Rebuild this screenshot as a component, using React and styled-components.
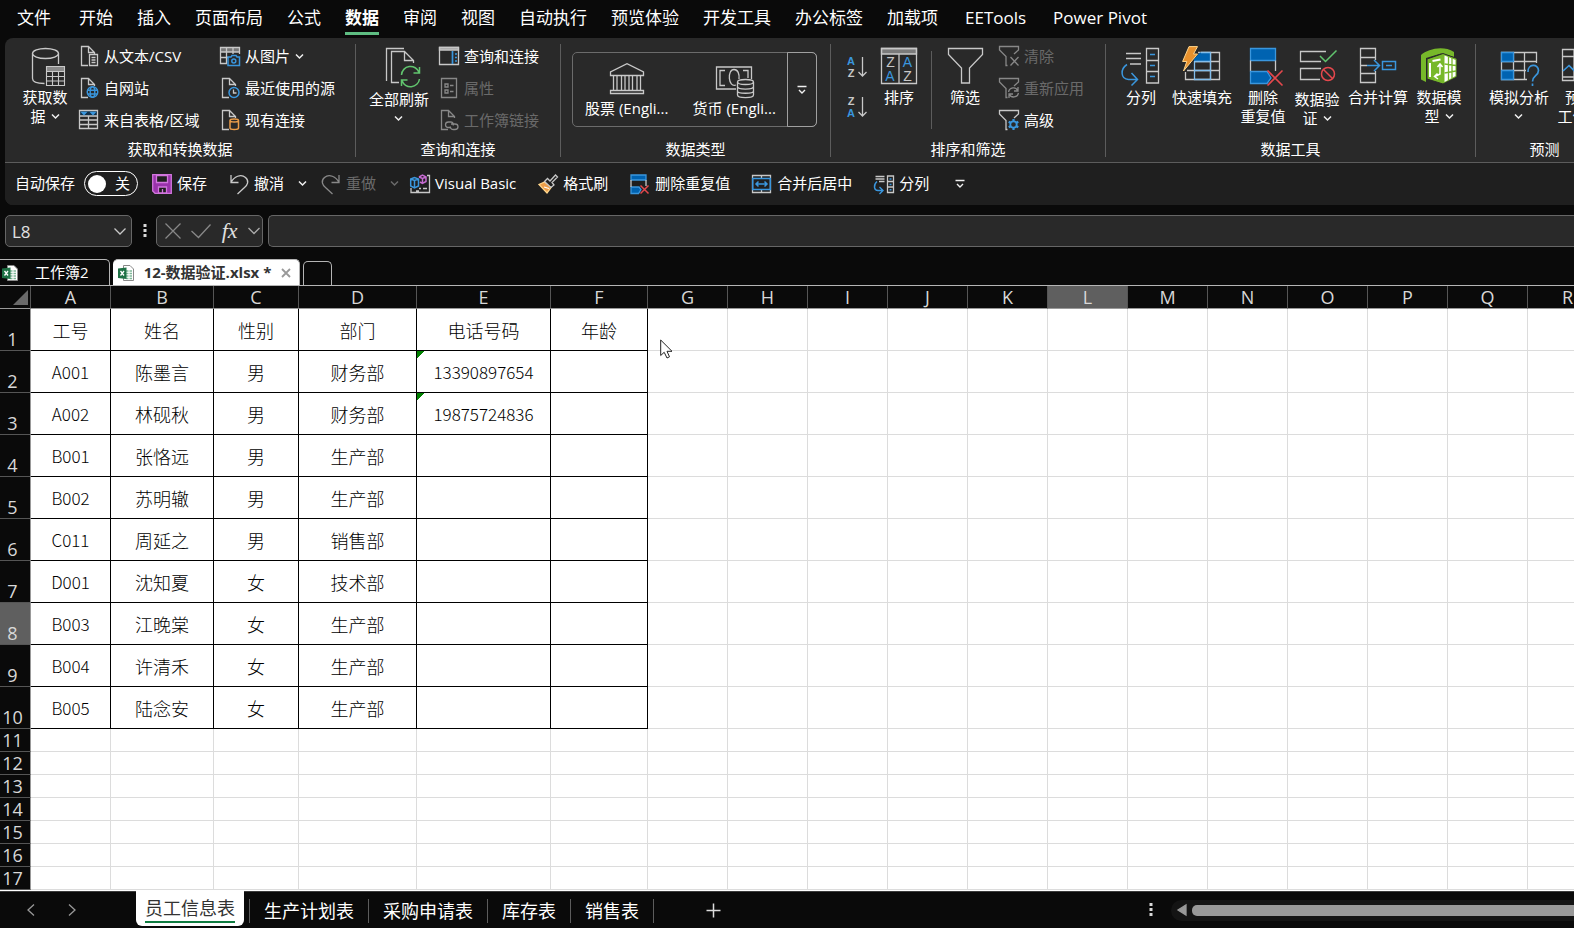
import React, { useState } from 'react'
import styled, { createGlobalStyle, css } from 'styled-components'

const GRAY = '#c8c8c8'
const BLUE = '#3a96dd'
const FILL = '#0063b1'
const RED = '#e5484d'
const DIM = '#6a6a6a'

/* ---------- icons ---------- */

function Svg({ w = 20, h = 20, children }) {
  return (
    <svg width={w} height={h} viewBox={`0 0 ${w} ${h}`} fill="none" stroke={GRAY} strokeWidth="1.3" aria-hidden="true">
      {children}
    </svg>
  )
}

const Big = ({ children }) => <Svg w={40} h={40}>{children}</Svg>

const Chevron = ({ color = '#f0f0f0' }) => (
  <Svg w={9} h={7}>
    <path d="M1 1.5L4.5 5L8 1.5" stroke={color} strokeWidth="1.5" />
  </Svg>
)

const MoreChevron = () => (
  <Svg w={10} h={10}>
    <path d="M0.5 1.5H9.5M2 5L5 8L8 5" stroke="#f0f0f0" strokeWidth="1.4" />
  </Svg>
)

const DatabaseIcon = () => (
  <Big>
    <ellipse cx="20.5" cy="7.5" rx="13" ry="5" />
    <path d="M7.5 7.5V32.5C7.5 35.5 12 37.5 19.5 37.5M33.5 7.5V18" />
    <path d="M21.5 21H40V25H21.5z" fill="#8a8a8a" stroke="none" />
    <path d="M21.5 20.5H39.5V39.5H21.5zM21.5 25.5H39.5M21.5 30.5H39.5M21.5 35H39.5M27.5 25.5V39.5M33.5 25.5V39.5" strokeWidth="1.1" />
  </Big>
)

const RefreshAllIcon = () => (
  <Big>
    <path d="M25 2.5H7.5V35" />
    <path d="M20 36.5H12.5V5.5H25.5L34.5 14.5V17M25.5 5.5V14.5H34.5" />
    <path d="M22.5 29A9 9 0 0 1 40 26.5M40.5 21V27H34.5M40.5 33A9 9 0 0 1 23 34.500M22.5 40V34H28.5" stroke="#61c46e" strokeWidth="1.5" />
  </Big>
)

const SortIcon = () => (
  <Big>
    <path d="M2.5 2.5H37.5V8H2.5z" fill="#7a7a7a" />
    <path d="M2.5 2.5H37.5V37.5H2.5zM20 8V37.5" />
    <g stroke="none" fontSize="14" fontFamily="Liberation Sans, sans-serif" textAnchor="middle">
      <text x="11.5" y="21" fill={GRAY}>Z</text>
      <text x="11" y="35" fill={BLUE}>A</text>
      <text x="28.5" y="21" fill={BLUE}>A</text>
      <text x="28.5" y="35" fill={GRAY}>Z</text>
    </g>
  </Big>
)

const FilterIcon = () => (
  <Big>
    <path d="M3.5 2.5H37.5V8.5L24.5 22V37H16.5V22L3.5 8.5z" />
  </Big>
)

const ColumnsIcon = () => (
  <Big>
    <path d="M25.5 2.5H37.5V37H25.5zM25.5 14.5H37.5M25.5 25.5H37.5M5 7.5H20M5 12.5H20M9 18H20" />
    <path d="M29 8.5H34M29 19.5H34M29 30.5H34M6 18.5C-1 23 -0.5 33 7.5 33.5H16M10.5 27L16.5 33.5L10.5 39.5" stroke={BLUE} strokeWidth="1.5" />
  </Big>
)

const FlashFillIcon = () => (
  <Big>
    <path d="M16 6.5H37.5V33.5H3.5V26M28.5 6.5V33.5M5 24.5H37.5M12 15.5H37.5" />
    <path d="M18 6.5H28.5V15.5H12V13z" fill={FILL} stroke="none" />
    <path d="M12.5 15V33.5H28.5V6.5H19M12.5 15.5H28.5M12.5 24.5H28.5" stroke="#83beec" />
    <path d="M7 0.6H15.5L11.5 8H15.5L1.5 25L4.8 15.5H0.6z" fill="#e8912d" stroke="#ffd58a" strokeWidth="1" />
  </Big>
)

const RemoveDupIcon = () => (
  <Big>
    <path d="M7.5 2.5H32.5V14.5H7.5z" fill={FILL} stroke={BLUE} />
    <path d="M7.5 14.5V25.5M32.5 14.5V25" />
    <path d="M24 25.5H7.5V37.5H24L28 32z" fill={FILL} stroke={BLUE} />
    <path d="M24.5 24.5L39.5 39.5M39.5 24.5L24.5 39.5" stroke={RED} strokeWidth="1.6" />
  </Big>
)

const ValidationIcon = () => (
  <Big>
    <path d="M29 5.5H3.5V15.5H24M24 22.5H3.5V33.5H23" />
    <path d="M23 10L28.5 15.5L39.5 4.5" stroke="#61c46e" strokeWidth="1.5" />
    <circle cx="31" cy="28" r="6.5" stroke={RED} strokeWidth="1.5" />
    <path d="M26.5 23.5L35.5 32.5" stroke={RED} strokeWidth="1.5" />
  </Big>
)

const ConsolidateIcon = () => (
  <Big>
    <path d="M2.5 2.5H17.5V11.5H2.5zM2.5 27.5H17.5V36.5H2.5zM2.5 11.5V27.5M2.5 19.5H9M17.5 11.5V14M17.5 25V27.5" />
    <path d="M9 19.5H21.5M16 14L21.5 19.5L16 25M24.5 15.5H37.5V23.5H24.5zM28 19.5H34" stroke={BLUE} strokeWidth="1.5" />
  </Big>
)

const DataModelIcon = () => (
  <Big>
    <path d="M2 9C9 3 24 -1 35 6V11L22 7.5L7 12V36L2 33.5z" fill="#77b82a" stroke="none" />
    <path d="M24 7.5L38 12.5V31L24 38L8 33V13z" fill="#77b82a" stroke="#292929" strokeWidth="1" />
    <path d="M25.5 9.5L36.5 14V30L25.5 36z" fill="#fff" stroke="none" />
    <path d="M25.5 18L37 19.5M25.5 27L37 25M29.5 11V34M33 12V32" stroke="#77b82a" />
    <path d="M11 17V31M13.5 15L21.5 13.5" stroke="#fff" strokeWidth="2" />
    <path d="M21 18V28L16 30.5M18.5 21L21 18L23.5 21M18.5 27.5L15.5 30.5L19 33" stroke="#fff" strokeWidth="1.5" />
  </Big>
)

const WhatIfIcon = () => (
  <Big>
    <path d="M28 33.5H2.5V6.5H37.5V17M14.5 6.5V33.5M25.5 6.5V33.5M2.5 15.5H37.5M2.5 24.5H27" />
    <path d="M2.5 6.5H14.5V15.5H2.5zM2.5 24.5H14.5V33.5H2.5z" fill={FILL} stroke={BLUE} />
    <path d="M29 26C28.5 17.5 39.5 17.5 39.5 24.5C39.5 30 33.5 29.5 33.5 35.5M33.5 37.5V40" stroke={BLUE} strokeWidth="1.7" />
  </Big>
)

const ForecastIcon = () => (
  <Big>
    <path d="M2.5 3.5H37.5V34.5H2.5zM2.5 10.5H37.5M14 3.5V34.5M25.5 3.5V34.5M2.5 31H14" />
    <path d="M3 25L9 19.5L14 24.5L24 14L38 22" stroke={BLUE} strokeWidth="1.6" />
  </Big>
)

const BankIcon = () => (
  <Svg w={40} h={38}>
    <path d="M3.5 14.5V11L20 2.7L36.5 11V14.5zM3.5 32.5V29.5H36.5V32.5zM6.5 14.5V29.5M10 14.5V29.5M14.5 14.5V29.5M18 14.5V29.5M22 14.5V29.5M25.5 14.5V29.5M30 14.5V29.5M33.5 14.5V29.5" />
  </Svg>
)

const MoneyIcon = () => (
  <Svg w={40} h={38}>
    <path d="M22 28H2.5V6H37.5V18M11 9.5H6V24.5H11M29 9.5H34V17" />
    <path d="M22 24C14 27 13 8.5 20 8.5C24 8.5 25.5 13 25 18" />
    <ellipse cx="31.5" cy="21" rx="8" ry="2.5" />
    <path d="M23.5 21V34C23.5 37.5 39.5 37.5 39.5 34V21M23.5 25.5C23.5 29 39.5 29 39.5 25.5M23.5 30C23.5 33 39.5 33 39.5 30" />
  </Svg>
)

const SortAz = ({ desc }) => (
  <Svg w={22} h={24}>
    <g stroke="none" fontSize="11" fontWeight="700" fontFamily="Liberation Sans, sans-serif" textAnchor="middle">
      <text x="5" y="10" fill={desc ? GRAY : BLUE}>{desc ? 'Z' : 'A'}</text>
      <text x="5" y="22" fill={desc ? BLUE : GRAY}>{desc ? 'A' : 'Z'}</text>
    </g>
    <path d="M16.5 2V21M12.5 17L16.5 21L20.5 17" />
  </Svg>
)

const Page = ({ color }) => <path d="M9 19.5H2.5V0.5H9.5L15.5 6.5V8M9.5 0.5V6.5H15.5" stroke={color || GRAY} />

const CsvIcon = () => (
  <Svg>
    <Page />
    <path d="M10.5 8.5H18.5V19.5H10.5zM12.5 11.5H16.5M12.5 14H16.5M12.5 16.5H16.5" />
  </Svg>
)
const WebIcon = () => (
  <Svg>
    <Page />
    <g stroke={BLUE} strokeWidth="1.4">
      <circle cx="13.5" cy="14" r="5.3" />
      <ellipse cx="13.5" cy="14" rx="2.3" ry="5.3" />
      <path d="M8.5 12.3H18.5M8.5 16H18.5" />
    </g>
  </Svg>
)
const TableIcon = () => (
  <Svg>
    <path d="M0.5 1H18.5V5.5H0.5z" fill="#10304a" stroke="none" />
    <path d="M0.5 0.5H18.5V18.5H0.5zM0.5 6H18.5M0.5 10H18.5M0.5 14.5H18.5M9.5 6V18.5" />
    <path d="M3 2.5H7L5 4.5zM12 2.5H16L14 4.5z" fill={BLUE} stroke={BLUE} />
  </Svg>
)
const PictureIcon = () => (
  <Svg>
    <path d="M0.5 2H19V6H0.5z" fill="#777" stroke="none" />
    <path d="M7 17.5H0.5V1.5H19.5V8M0.5 6H19.5M0.5 11.5H8M6.5 1.5V17.5M13 1.5V8" />
    <path d="M8 11H11L12 9.5H16L17 11H19.5V19.5H8z" fill="#292929" stroke={BLUE} strokeWidth="1.5" />
    <circle cx="13.8" cy="15" r="2" stroke={BLUE} strokeWidth="1.5" />
  </Svg>
)
const RecentIcon = () => (
  <Svg>
    <Page />
    <circle cx="14" cy="14.5" r="5" stroke={BLUE} strokeWidth="1.5" />
    <path d="M13.5 11.5V15H16.5" />
  </Svg>
)
const ConnectionIcon = () => (
  <Svg>
    <Page />
    <path d="M10 10.5V18C10 20 18.5 20 18.5 18V10.5C18.5 8.5 10 8.5 10 10.5C10 12.5 18.5 12.5 18.5 10.5" fill="#292929" stroke="#eb9d4a" strokeWidth="1.5" />
  </Svg>
)
const QueriesIcon = () => (
  <Svg>
    <path d="M0.5 1.5H19.5V4H0.5z" fill="#999" />
    <path d="M0.5 1.5H19.5V18.5H0.5z" />
    <path d="M13.5 5V18M16 8H18M16 11.5H18M16 15H18" stroke={BLUE} strokeWidth="1.7" />
  </Svg>
)
const PropsIcon = () => (
  <Svg>
    <path d="M2.5 0.5H17.5V19.5H2.5z" stroke="#888" />
    <path d="M6 6H9V9H6zM6 12H9V15H6zM11 7.5H14.5M11 13.5H14.5" stroke="#888" />
  </Svg>
)
const LinkIcon = () => (
  <Svg>
    <Page color="#888" />
    <path d="M12 17.5H9.5C5.5 17.5 5.5 12 9.5 12H12C14 12 15 14 14 15.5M12 14H16C20 14 20 19.5 16 19.5H14C12 19.5 11 17.5 11.5 16.5" stroke="#888" />
  </Svg>
)

const Funnel = ({ color }) => <path d="M8.5 19.5H7V10.5L0.5 4V0.5H19.5V4L15 8" stroke={color} />

const ClearIcon = () => (
  <Svg>
    <Funnel color="#888" />
    <path d="M11.5 11L19.5 19.5M19.5 11L11.5 19.5" stroke="#888" />
  </Svg>
)
const ReapplyIcon = () => (
  <Svg>
    <Funnel color="#888" />
    <path d="M9.5 14C10.5 9 17 8.5 18.5 12.5M19 9V13H15M19.5 15C18.5 20 12 20 10.5 16.5M10 20V16H14" stroke="#888" />
  </Svg>
)
const AdvancedIcon = () => (
  <Svg>
    <Funnel color={GRAY} />
    <circle cx="14.5" cy="14.5" r="3.2" stroke={BLUE} strokeWidth="1.8" />
    <path d="M14.5 9V11M14.5 18V20M9.7 11.8L11.5 12.8M17.5 16.2L19.3 17.2M19.3 11.8L17.5 12.8M11.5 16.2L9.7 17.2" stroke={BLUE} strokeWidth="2.2" />
  </Svg>
)
const SaveIcon = () => (
  <Svg>
    <path d="M0.7 0.7H19.3V19.3H3L0.7 17z" fill="#9a33ab" stroke="#d176dd" />
    <path d="M4.5 1.5H15.5V8.5H4.5zM6.5 13H14.5V19H6.5z" fill="#1f1f1f" stroke="#d176dd" />
    <path d="M10.5 15V19" stroke="#d176dd" />
  </Svg>
)
const UndoIcon = () => (
  <Svg>
    <path d="M2 1V8.5H9.5M2 8.5C5 2.5 12 -0.5 16.5 3.5C20.5 7 18.5 11 15.5 13.5L8.5 20" />
  </Svg>
)
const RedoIcon = () => (
  <Svg>
    <path d="M18 1V8.5H10.5M18 8.5C15 2.5 8 -0.5 3.5 3.5C-0.5 7 1.5 11 4.5 13.5L11.5 20" stroke="#888" />
  </Svg>
)
const VbIcon = () => (
  <Svg>
    <path d="M1 14V18.5H19.5V1.5H17M9 14.5H11M13 14.5H17M6 17H9" />
    <path d="M0.7 5L4.5 3.5L8.5 5V12L4.5 14L0.7 12zM0.7 5L4.5 6.5L8.5 5M4.5 6.5V14" stroke={BLUE} strokeWidth="1.5" />
    <path d="M9 3L12.5 1L16 3V7.5L12.5 9.5L10 8M9 3L12.5 4.5L16 3M12.5 4.5V9" stroke="#c56bd0" strokeWidth="1.5" />
  </Svg>
)
const BrushIcon = () => (
  <Svg>
    <path d="M6.5 8L1 10.5L9 19L13.5 13z" fill="#eb9d4a" stroke="#ffd58a" />
    <path d="M6.5 7.5L9.5 4.5L12 7L17.5 1L19.5 3L14 8.5L16 11L13 13.5z" fill="#1f1f1f" />
    <path d="M6 13L11 14.5" stroke="#fff" />
  </Svg>
)
const DupSmallIcon = () => (
  <Svg>
    <path d="M1 1H16V6H1zM1 13H9L11 15.5L8.5 19.5H1z" fill={FILL} stroke={BLUE} />
    <path d="M1 6V13M16 6V12" />
    <path d="M10.5 11.5L18.5 19.5M18.5 11.5L10.5 19.5" stroke={RED} strokeWidth="1.5" />
  </Svg>
)
const MergeIcon = () => (
  <Svg>
    <path d="M0.5 1.5H18.5V18.5H0.5zM9.5 1.5V5M9.5 15V18.5" />
    <path d="M0.7 4.5H18.3V15.5H0.7zM4 10H15M6.5 7.5L4 10L6.5 12.5M12.5 7.5L15 10L12.5 12.5" stroke={BLUE} strokeWidth="1.5" />
  </Svg>
)
const ColumnsSmallIcon = () => (
  <Svg>
    <path d="M13.5 2H19.5V18.5H13.5zM13.5 7.5H19.5M13.5 13H19.5M1.5 2.5H10.5M1.5 5H10.5M5 7.5H10.5" />
    <path d="M3 7.5C-1 11 0 16.5 4 16.5H8.5M5.5 13L9 16.5L5.5 20M15.5 5H17.5M15.5 10.5H17.5M15.5 15.8H17.5" stroke={BLUE} strokeWidth="1.4" />
  </Svg>
)
const ExcelIcon = () => (
  <Svg w={16} h={16}>
    <path d="M5.5 0.5H12L15.5 4V15.5H5.5z" fill="#fff" stroke="#888" strokeWidth="1" />
    <path d="M8 6H14M8 8.5H14M8 11H14M8 13.5H14" stroke="#7fb899" strokeDasharray="2.5 1" />
    <path d="M0 3.5L8.5 2.5V14L0 13z" fill="#1e7145" stroke="none" />
    <path d="M2.5 6L6 10.5M6 6L2.5 10.5" stroke="#fff" />
  </Svg>
)
const Dots = () => (
  <Svg w={4} h={14}>
    <path d="M0.5 0H3.5V3H0.5zM0.5 5H3.5V8H0.5zM0.5 10H3.5V13H0.5z" fill="#d8d8d8" stroke="none" />
  </Svg>
)

/* ---------- data ---------- */

const menus = ['文件', '开始', '插入', '页面布局', '公式', '数据', '审阅', '视图', '自动执行', '预览体验', '开发工具', '办公标签', '加载项', 'EETools', 'Power Pivot']

const columns = [
  ['A', 80], ['B', 103], ['C', 85], ['D', 118], ['E', 134], ['F', 97],
  ...'GHIJKLMNOPQR'.split('').map((c) => [c, 80]),
]

const records = [
  ['工号', '姓名', '性别', '部门', '电话号码', '年龄'],
  ['A001', '陈墨言', '男', '财务部', '13390897654', ''],
  ['A002', '林砚秋', '男', '财务部', '19875724836', ''],
  ['B001', '张恪远', '男', '生产部', '', ''],
  ['B002', '苏明辙', '男', '生产部', '', ''],
  ['C011', '周延之', '男', '销售部', '', ''],
  ['D001', '沈知夏', '女', '技术部', '', ''],
  ['B003', '江晚棠', '女', '生产部', '', ''],
  ['B004', '许清禾', '女', '生产部', '', ''],
  ['B005', '陆念安', '女', '生产部', '', ''],
]

const rowNumbers = Array.from({ length: 17 }, (_, i) => i + 1)
const sheets = ['员工信息表', '生产计划表', '采购申请表', '库存表', '销售表']

/* ---------- pieces ---------- */

function BigButton({ icon, lines, width, chevron, split }) {
  return (
    <BigBtn $width={width} $split={split}>
      {icon}
      <span>
        {lines.map((line, i) => (
          <BigLine key={i}>
            {line}
            {chevron && i === lines.length - 1 && <Chevron />}
          </BigLine>
        ))}
      </span>
    </BigBtn>
  )
}

function SmallButton({ icon, children, disabled, chevron }) {
  return (
    <SmallBtn disabled={disabled}>
      {icon}
      {children}
      {chevron && <Chevron />}
    </SmallBtn>
  )
}

function Group({ title, width, children }) {
  return (
    <GroupBox $width={width} aria-label={title}>
      <GroupBody>{children}</GroupBody>
      <GroupTitle>{title}</GroupTitle>
    </GroupBox>
  )
}

function Ribbon() {
  return (
    <RibbonRow>
      <Group title="获取和转换数据" width={351}>
        <Spacer $w={10} />
        <BigButton icon={<DatabaseIcon />} lines={['获取数', '据']} width={60} chevron />
        <SmallColumn $width={141}>
          <SmallButton icon={<CsvIcon />}>从文本/CSV</SmallButton>
          <SmallButton icon={<WebIcon />}>自网站</SmallButton>
          <SmallButton icon={<TableIcon />}>来自表格/区域</SmallButton>
        </SmallColumn>
        <SmallColumn>
          <SmallButton icon={<PictureIcon />} chevron>从图片</SmallButton>
          <SmallButton icon={<RecentIcon />}>最近使用的源</SmallButton>
          <SmallButton icon={<ConnectionIcon />}>现有连接</SmallButton>
        </SmallColumn>
      </Group>
      <Group title="查询和连接" width={205}>
        <Spacer $w={7} />
        <BigButton icon={<RefreshAllIcon />} lines={['全部刷新', '']} width={72} chevron split />
        <SmallColumn>
          <SmallButton icon={<QueriesIcon />}>查询和连接</SmallButton>
          <SmallButton icon={<PropsIcon />} disabled>属性</SmallButton>
          <SmallButton icon={<LinkIcon />} disabled>工作簿链接</SmallButton>
        </SmallColumn>
      </Group>
      <Group title="数据类型" width={270}>
        <Gallery>
          <GalleryItem><BankIcon />股票 (Engli...</GalleryItem>
          <GalleryItem><MoneyIcon />货币 (Engli...</GalleryItem>
          <GalleryMore aria-label="更多数据类型"><MoreChevron /></GalleryMore>
        </Gallery>
      </Group>
      <Group title="排序和筛选" width={275}>
        <AzColumn>
          <IconBtn aria-label="升序"><SortAz /></IconBtn>
          <IconBtn aria-label="降序"><SortAz desc /></IconBtn>
        </AzColumn>
        <BigButton icon={<SortIcon />} lines={['排序']} width={50} />
        <InnerRule />
        <BigButton icon={<FilterIcon />} lines={['筛选']} width={50} />
        <Spacer $w={5} />
        <SmallColumn>
          <SmallButton icon={<ClearIcon />} disabled>清除</SmallButton>
          <SmallButton icon={<ReapplyIcon />} disabled>重新应用</SmallButton>
          <SmallButton icon={<AdvancedIcon />}>高级</SmallButton>
        </SmallColumn>
      </Group>
      <Group title="数据工具" width={370}>
        <Spacer $w={5} />
        <BigButton icon={<ColumnsIcon />} lines={['分列']} width={60} />
        <BigButton icon={<FlashFillIcon />} lines={['快速填充']} width={62} />
        <BigButton icon={<RemoveDupIcon />} lines={['删除', '重复值']} width={60} />
        <BigButton icon={<ValidationIcon />} lines={['数据验', '证']} width={48} chevron split />
        <BigButton icon={<ConsolidateIcon />} lines={['合并计算']} width={74} />
        <BigButton icon={<DataModelIcon />} lines={['数据模', '型']} width={48} chevron />
      </Group>
      <Group title="预测" width={138}>
        <Spacer $w={7} />
        <BigButton icon={<WhatIfIcon />} lines={['模拟分析', '']} width={72} chevron />
        <BigButton icon={<ForecastIcon />} lines={['预测', '工作表']} width={50} />
      </Group>
    </RibbonRow>
  )
}

function QuickAccess() {
  const [autoSave, setAutoSave] = useState(false)
  return (
    <QuickBar>
      <AutoSave>
        自动保存
        <Toggle>
          <Knob type="checkbox" role="switch" checked={autoSave} onChange={(e) => setAutoSave(e.target.checked)} />
          {autoSave ? '开' : '关'}
        </Toggle>
      </AutoSave>
      <QuickBtn $gap={22}><SaveIcon />保存</QuickBtn>
      <QuickBtn $gap={14}><UndoIcon />撤消</QuickBtn>
      <QuickBtn $gap={14} aria-label="撤消历史"><Chevron /></QuickBtn>
      <QuickBtn $gap={14} disabled><RedoIcon />重做</QuickBtn>
      <QuickBtn $gap={11} disabled aria-label="重做历史"><Chevron color={DIM} /></QuickBtn>
      <QuickBtn $gap={22}><VbIcon />Visual Basic</QuickBtn>
      <QuickBtn $gap={22}><BrushIcon />格式刷</QuickBtn>
      <QuickBtn $gap={22}><DupSmallIcon />删除重复值</QuickBtn>
      <QuickBtn $gap={22}><MergeIcon />合并后居中</QuickBtn>
      <QuickBtn $gap={26}><ColumnsSmallIcon />分列</QuickBtn>
      <QuickBtn aria-label="自定义快速访问工具栏"><MoreChevron /></QuickBtn>
    </QuickBar>
  )
}

function FormulaBar() {
  return (
    <FormulaRow>
      <NameBox>
        <input aria-label="名称框" defaultValue="L8" />
        <Svg w={14} h={9}><path d="M1.5 1.5L7 7L12.5 1.5" /></Svg>
      </NameBox>
      <Dots />
      <FxBox>
        <button aria-label="取消"><Svg w={16} h={16}><path d="M0.5 0.5L15.5 15.5M15.5 0.5L0.5 15.5" stroke="#888" /></Svg></button>
        <button aria-label="输入"><Svg w={20} h={16}><path d="M0.5 8L7.5 14.5L19.5 1.5" stroke="#888" /></Svg></button>
        <FxBtn>fx</FxBtn>
        <button aria-label="函数列表"><Svg w={12} h={8}><path d="M0.5 1L6 6.5L11.5 1" stroke="#aaa" /></Svg></button>
      </FxBox>
      <FormulaInput aria-label="编辑栏" />
    </FormulaRow>
  )
}

function Sheet() {
  return (
    <GridArea>
      <Grid>
        <colgroup>
          <col width={31} />
          {columns.map(([name, w]) => <col key={name} width={w} />)}
        </colgroup>
        <thead>
          <tr>
            <Corner aria-label="全选"><Svg w={15} h={15}><path d="M15 0V15H0z" fill="#6a6a6a" stroke="none" /></Svg></Corner>
            {columns.map(([name]) => <ColHead key={name} $active={name === 'L'}>{name}</ColHead>)}
          </tr>
        </thead>
        <tbody>
          {rowNumbers.map((n) => (
            <tr key={n}>
              <RowHead $active={n === 8}>{n}</RowHead>
              {columns.map(([name], c) => {
                const value = records[n - 1]?.[c]
                return (
                  <Cell
                    key={name}
                    $tall={n <= 10}
                    $boxed={value !== undefined}
                    $latin={/^[A-Z\d]+$/.test(value || '')}
                    $textNumber={/^\d{11}$/.test(value || '')}
                  >
                    {value}
                  </Cell>
                )
              })}
            </tr>
          ))}
        </tbody>
      </Grid>
      <Pointer>
        <Svg w={14} h={20}>
          <path d="M0.7 1V16.5L4.2 13.3L7 19L9.5 17.8L7 12.3H12z" fill="#fff" stroke="#222" strokeWidth="1" />
        </Svg>
      </Pointer>
    </GridArea>
  )
}

function App() {
  return (
    <>
      <GlobalStyle />
      <Window>
        <Menu>
          {menus.map((m) => <MenuItem key={m} $active={m === '数据'}>{m}</MenuItem>)}
        </Menu>
        <Panel>
          <Ribbon />
          <QuickAccess />
        </Panel>
        <FormulaBar />
        <FileTabs>
          <FileTab><ExcelIcon /><span>工作簿2</span></FileTab>
          <FileTab $active>
            <ExcelIcon />
            <span>12-数据验证.xlsx *</span>
            <Svg w={10} h={10}><path d="M1 1L9 9M9 1L1 9" stroke="#999" strokeWidth="1.8" /></Svg>
          </FileTab>
          <NewTab aria-label="新建" />
        </FileTabs>
        <Sheet />
        <SheetBar>
          <SheetNav>
            <IconBtn aria-label="上一个"><Svg w={8} h={12}><path d="M7 0.5L1 6L7 11.5" stroke="#999" /></Svg></IconBtn>
            <IconBtn aria-label="下一个"><Svg w={8} h={12}><path d="M1 0.5L7 6L1 11.5" stroke="#999" /></Svg></IconBtn>
          </SheetNav>
          {sheets.map((s, i) => <SheetTab key={s} $active={i === 0}><span>{s}</span></SheetTab>)}
          <SheetRule />
          <AddSheet aria-label="新工作表"><Svg w={15} h={15}><path d="M7.5 0.5V14.5M0.5 7.5H14.5" stroke="#ddd" strokeWidth="1.5" /></Svg></AddSheet>
          <ScrollArea>
            <Dots />
            <ScrollTrack>
              <Svg w={10} h={12}><path d="M9 1V11L1 6z" fill="#999" stroke="#999" /></Svg>
              <ScrollThumb />
            </ScrollTrack>
          </ScrollArea>
        </SheetBar>
      </Window>
    </>
  )
}

/* ---------- styles ---------- */

const GlobalStyle = createGlobalStyle`
  * {
    box-sizing: border-box;
  }
  body {
    margin: 0;
    background: #0a0a0a;
    color: #fff;
    font: 15px/19px "Open Sans", "Noto Sans CJK SC", sans-serif;
    overflow: hidden;
  }
  button, input {
    font: inherit;
    color: inherit;
    background: none;
    border: 0;
    padding: 0;
    margin: 0;
  }
  button {
    white-space: nowrap;
  }
  svg {
    display: block;
    flex: none;
    overflow: visible;
  }
`

const Window = styled.div`
  display: flex;
  flex-direction: column;
  height: 100vh;
  overflow: hidden;
`

const Menu = styled.nav`
  display: flex;
  flex: none;
  gap: 24px;
  height: 38px;
  padding-left: 17px;
`

const MenuItem = styled.button`
  font-size: 17px;
  line-height: 24px;
  height: 35px;
  padding-top: 3px;
  border-bottom: 3px solid ${(p) => (p.$active ? '#5ebd82' : 'transparent')};
  font-weight: ${(p) => (p.$active ? 700 : 400)};
  &:first-child {
    margin-right: 4px;
  }
  &:nth-last-child(-n + 2) {
    margin-left: 3px;
  }
`

const Panel = styled.section`
  flex: none;
  margin-left: 5px;
  border-radius: 8px 0 0 8px;
  background: #292929;
  overflow: hidden;
`

const RibbonRow = styled.div`
  display: flex;
  height: 125px;
  border-bottom: 1px solid #5c5c5c;
`

const GroupBox = styled.section`
  display: flex;
  flex-direction: column;
  flex: none;
  width: ${(p) => p.$width}px;
  margin: 6px 0 5px;
  border-right: 1px solid #5c5c5c;
`

const GroupBody = styled.div`
  display: flex;
  flex: none;
  align-items: flex-start;
  height: 97px;
`

const GroupTitle = styled.div`
  line-height: 16px;
  text-align: center;
`

const Spacer = styled.div`
  flex: none;
  width: ${(p) => p.$w}px;
`

const BigBtn = styled.button`
  display: flex;
  flex-direction: column;
  align-items: center;
  flex: none;
  width: ${(p) => p.$width}px;
  padding-top: 2px;
  gap: ${(p) => (p.$split ? 4 : 2)}px;
`

const BigLine = styled.span`
  display: flex;
  align-items: center;
  justify-content: center;
  gap: 5px;
  height: 19px;
`

const SmallColumn = styled.div`
  display: flex;
  flex-direction: column;
  align-items: flex-start;
  flex: none;
  width: ${(p) => (p.$width ? p.$width + 'px' : 'auto')};
  margin-top: -4px;
  padding-left: 4px;
`

const SmallBtn = styled.button`
  display: flex;
  align-items: center;
  gap: 5px;
  height: 32px;
  &:disabled {
    color: ${DIM};
  }
`

const Gallery = styled.div`
  display: flex;
  width: 245px;
  height: 75px;
  margin: 8px 0 0 11px;
  border: 1px solid #6b6b6b;
  border-radius: 5px;
`

const GalleryItem = styled.button`
  display: flex;
  flex-direction: column;
  align-items: center;
  flex: 1;
  padding-top: 8px;
`

const GalleryMore = styled.button`
  display: flex;
  align-items: center;
  justify-content: center;
  width: 30px;
  margin: -1px;
  border: 1px solid #a0a0a0;
  border-radius: 0 5px 5px 0;
`

const AzColumn = styled.div`
  display: flex;
  flex-direction: column;
  gap: 16px;
  padding: 11px 6px 0 15px;
`

const IconBtn = styled.button`
  display: flex;
  align-items: center;
  justify-content: center;
`

const InnerRule = styled.div`
  width: 1px;
  height: 78px;
  margin: 7px 8px 0 7px;
  background: #5c5c5c;
`

const QuickBar = styled.div`
  display: flex;
  align-items: center;
  height: 42px;
  padding: 0 0 1px 10px;
  background: #1f1f1f;
`

const AutoSave = styled.label`
  display: flex;
  align-items: center;
  gap: 9px;
  margin-right: 14px;
`

const Toggle = styled.span`
  display: flex;
  align-items: center;
  justify-content: space-between;
  width: 54px;
  height: 25px;
  padding: 0 7px 0 3px;
  border: 1px solid #fff;
  border-radius: 13px;
`

const Knob = styled.input`
  appearance: none;
  width: 18px;
  height: 18px;
  border-radius: 50%;
  background: #fff;
`

const QuickBtn = styled.button`
  display: flex;
  align-items: center;
  flex: none;
  gap: 5px;
  margin-right: ${(p) => p.$gap || 0}px;
  &:disabled {
    color: ${DIM};
  }
`

const FormulaRow = styled.div`
  display: flex;
  align-items: center;
  flex: none;
  height: 54px;
  padding: 0 0 2px 5px;
`

const box = css`
  display: flex;
  align-items: center;
  height: 32px;
  background: #292929;
  border: 1px solid #666;
  border-radius: 5px;
`

const NameBox = styled.div`
  ${box}
  width: 127px;
  margin-right: 11px;
  padding: 0 4px 0 6px;
  input {
    flex: 1;
    min-width: 0;
    font-size: 17px;
    color: #e0e0e0;
  }
`

const FxBox = styled.div`
  ${box}
  justify-content: space-between;
  width: 107px;
  margin: 0 5px 0 9px;
  padding: 0 2px 0 8px;
`

const FxBtn = styled.button`
  font: italic 22px/26px "Liberation Serif", serif;
  color: #e0e0e0;
`

const FormulaInput = styled.input`
  ${box}
  flex: 1;
  border: 1px solid #666;
  border-right: 0;
  border-radius: 5px 0 0 5px;
  background: #292929;
  padding: 0 8px;
`

const FileTabs = styled.div`
  display: flex;
  align-items: flex-end;
  flex: none;
  height: 27px;
  border-bottom: 1px solid #b5b5b5;
`

const FileTab = styled.button`
  display: flex;
  align-items: center;
  height: 26px;
  border: 1px solid #b5b5b5;
  border-bottom: 0;
  border-left: 0;
  border-radius: 0 5px 0 0;
  width: 110px;
  padding-left: 2px;
  margin-right: 3px;
  gap: 17px;
  ${(p) => p.$active && css`
    width: 187px;
    padding: 0 8px 0 5px;
    gap: 5px;
    background: #fff;
    color: #333;
    font-weight: 700;
    border-radius: 5px 5px 0 0;
    justify-content: space-between;
  `}
`

const NewTab = styled.button`
  width: 29px;
  height: 24px;
  border: 1px solid #b5b5b5;
  border-bottom: 0;
  border-radius: 5px 5px 0 0;
`

const GridArea = styled.main`
  position: relative;
  flex: 1;
  min-height: 0;
  overflow: hidden;
  background: #fff;
`

const Grid = styled.table`
  table-layout: fixed;
  width: max-content;
  border-collapse: separate;
  border-spacing: 0;
`

const head = css`
  padding: 0;
  font-size: 18px;
  line-height: 22px;
  font-weight: 400;
  color: #d8d8d8;
  background: ${(p) => (p.$active ? '#5f5f5f' : '#0a0a0a')};
`

const ColHead = styled.th`
  ${head}
  height: 23px;
  border-right: 1px solid #555;
  border-bottom: 1px solid #999;
`

const Corner = styled(ColHead)`
  padding: 0 2px 0 13px;
`

const RowHead = styled.th`
  ${head}
  padding-right: 5px;
  vertical-align: bottom;
  border-right: 1px solid #999;
  border-bottom: 1px solid #555;
`

const Cell = styled.td`
  height: ${(p) => (p.$tall ? 42 : 23)}px;
  padding: 0;
  text-align: center;
  color: #000;
  font-family: "Noto Sans CJK SC", sans-serif;
  font-weight: 300;
  font-size: ${(p) => (p.$latin ? 17 : 18)}px;
  line-height: 20px;
  border-right: 1px solid ${(p) => (p.$boxed ? '#000' : '#dcdcdc')};
  border-bottom: 1px solid ${(p) => (p.$boxed ? '#000' : '#dcdcdc')};
  ${(p) => p.$textNumber && css`
    background: linear-gradient(135deg, #008000 5px, transparent 5px);
  `}
`

const Pointer = styled.div`
  position: absolute;
  left: 660px;
  top: 53px;
`

const SheetBar = styled.footer`
  display: flex;
  flex: none;
  height: 37px;
  background: #0a0a0a;
  border-top: 1px solid #3c3c3c;
`

const SheetNav = styled.div`
  display: flex;
  gap: 33px;
  width: 136px;
  padding-left: 27px;
`

const SheetRule = styled.div`
  flex: none;
  width: 1px;
  height: 24px;
  margin-top: 7px;
  background: #5c5c5c;
`

const SheetTab = styled.button`
  display: flex;
  align-items: center;
  font-size: 18px;
  line-height: 26px;
  padding: 2px 14px 0 0;
  &::before {
    content: '';
    width: 1px;
    height: 24px;
    margin-right: 14px;
    background: #5c5c5c;
  }
  ${(p) => p.$active && css`
    height: 35px;
    padding: 0 9px;
    margin-top: -1px;
    margin-right: 5px;
    background: #fff;
    color: #333;
    border-radius: 0 0 6px 6px;
    span {
      border-bottom: 2px solid #107c41;
    }
    &::before {
      display: none;
    }
  `}
`

const AddSheet = styled.button`
  margin: 0 0 0 52px;
  display: flex;
  align-items: center;
`

const ScrollArea = styled.div`
  display: flex;
  align-items: center;
  width: 27%;
  margin-left: auto;
  gap: 18px;
`

const ScrollTrack = styled.div`
  display: flex;
  align-items: center;
  flex: 1;
  gap: 5px;
  height: 21px;
  padding-left: 6px;
  background: #141414;
  border-radius: 11px 0 0 11px;
`

const ScrollThumb = styled.div`
  flex: 1;
  height: 11px;
  background: #999;
  border-radius: 5px 0 0 5px;
`

export default App
